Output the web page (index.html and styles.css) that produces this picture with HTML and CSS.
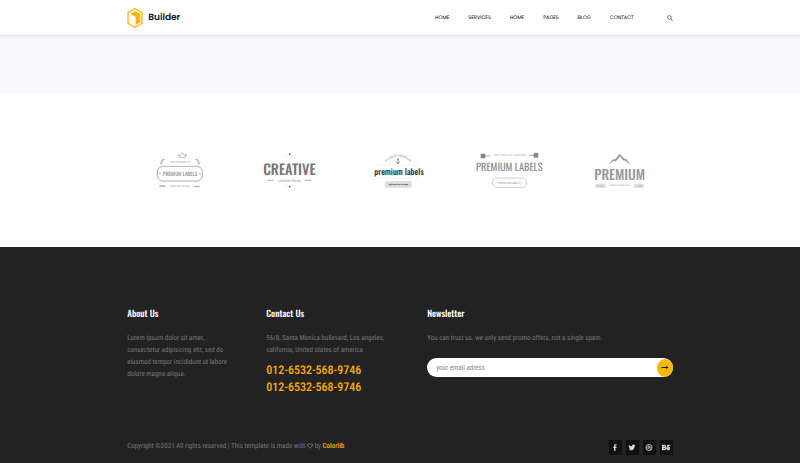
FILE: index.html
```html
<!DOCTYPE html>
<html lang="en">
<head>
<meta charset="utf-8">
<title>Builder</title>
<meta name="viewport" content="width=device-width, initial-scale=1">
<link rel="stylesheet" href="styles.css">
</head>
<body>
<header class="header">
  <div class="container header-row">
    <a class="logo" href="#">
      <svg class="logo-mark" viewBox="0 0 48 60" aria-hidden="true">
        <path d="M24 2 45 14V46L24 58 3 46V14Z" fill="#fff" stroke="#fdb913" stroke-width="4"/>
        <path d="M10 17 24 9 40 18V43L26 51V27Z" fill="#f8b600"/>
      </svg>
      <span>Builder</span>
    </a>
    <nav class="nav">
      <a href="#">HOME</a><a href="#">SERVICES</a><a href="#">HOME</a><a href="#">PAGES</a><a href="#">BLOG</a><a href="#">CONTACT</a>
      <button class="search" type="button" aria-label="Search"><svg viewBox="0 0 16 16"><circle cx="6.5" cy="6.5" r="5" fill="none" stroke="#555" stroke-width="2"/><path d="M10 10 15 15" stroke="#555" stroke-width="2.5"/></svg></button>
    </nav>
  </div>
</header>
<main>
  <div class="strip"></div>
  <section class="brands">
    <svg class="brand" viewBox="0 0 270 150" fill="#888" text-anchor="middle">
      <path d="M130 28 136 32 140 25 144 25 148 32 154 28 150 38H134Z" fill="none" stroke="#999" stroke-width="2"/>
      <path d="M78 58C78 50 82 45 89 42M192 58C192 50 188 45 181 42" fill="none" stroke="#aaa" stroke-width="5" stroke-dasharray="4 1"/>
      <text x="136" y="55" font-size="9">HIGH QUALITY</text>
      <path d="M84 64H186C190 65 202 68 202 78V94C202 104 190 107 186 108H84C80 107 67 104 67 94V78C67 68 80 65 84 64Z" fill="none" stroke="#888" stroke-width="2"/>
      <circle cx="75" cy="86" r="2"/><circle cx="195" cy="86" r="2"/>
      <text class="narrow" x="135" y="93" font-size="16">PREMIUM LABELS</text>
      <path d="M73 121h18v5H73ZM177 122h17v5h-17Z" opacity=".6"/>
      <text x="134" y="125" font-size="7">CREATIVE PACKERS</text>
    </svg>
    <svg class="brand" viewBox="0 0 270 150" fill="#777" text-anchor="middle">
      <text class="narrow medium" x="133" y="89" font-size="43">CREATIVE</text>
      <path d="M67 106H86M180 106H199" stroke="#888" stroke-width="2"/>
      <text x="133" y="110" font-size="10">LOREM IPSUM</text>
      <circle cx="134" cy="28" r="3"/><circle cx="124" cy="31" r="1"/><circle cx="143" cy="31" r="1"/>
      <circle cx="134" cy="125" r="3"/><circle cx="124" cy="122" r="1"/><circle cx="143" cy="122" r="1"/>
    </svg>
    <svg class="brand" viewBox="0 0 270 150" fill="#333" text-anchor="middle">
      <path id="arch" d="M92 54A48 48 0 0 1 168 54" fill="none"/>
      <text font-size="9" fill="#777"><textPath href="#arch" startOffset="50%">VINTAGE PREMIUM</textPath></text>
      <path d="M129 40V56M124 50 129 57 134 50M126 43h6" fill="none" stroke="#666" stroke-width="2"/>
      <path d="M66 61H192M66 99H192" stroke="#ddd"/>
      <text class="narrow medium" x="132" y="89" font-size="25">premium labels</text>
      <rect x="89" y="108" width="82" height="20" rx="9" fill="#ddd"/>
      <text x="130" y="121" font-size="6" font-weight="700">high quality vintage</text>
    </svg>
    <svg class="brand" viewBox="0 0 270 150" fill="#888" text-anchor="middle">
      <path d="M48 27h12v12H48ZM60 33H75M207 25h12v12h-12ZM192 31h15" stroke="#888" stroke-width="2"/>
      <text x="134" y="33" font-size="9" fill="#999">THE CREATIVE DESIGNS</text>
      <text class="narrow" x="133" y="79" font-size="31">PREMIUM LABELS</text>
      <rect x="82" y="99" width="103" height="29" rx="14" fill="none" stroke="#bbb" stroke-width="2"/>
      <text x="133" y="116" font-size="8">• PREMIUM LABELS •</text>
    </svg>
    <svg class="brand" viewBox="0 0 270 150" fill="#999" text-anchor="middle">
      <path d="M100 59 114 43 121 43 134 26 148 41 153 41 167 59 151 47 144 46 135 34 128 43 123 49 114 49Z"/>
      <text class="narrow medium" x="134" y="106" font-size="41">PREMIUM</text>
      <rect x="61" y="116" width="31" height="12" rx="4" fill="#ddd"/><rect x="177" y="116" width="30" height="12" rx="4" fill="#ddd"/>
      <text x="76" y="125" font-size="7">★★★</text><text x="192" y="125" font-size="7">★★★</text>
      <text x="134" y="124" font-size="7">CREATIVE DESIGNS</text>
    </svg>
  </section>
</main>
<footer class="footer">
  <div class="container footer-grid">
    <section><h2>About Us</h2><p>Lorem ipsum dolor sit amet,<br>consectetur adipisicing elit, sed do<br>eiusmod tempor incididunt ut labore<br>dolore magna aliqua.</p></section>
    <section><h2>Contact Us</h2><p>56/8, Santa Monica bullevard, Los angeles,<br>california, United states of america</p>
      <div class="phones"><a href="#">012-6532-568-9746</a><a href="#">012-6532-568-9746</a></div></section>
    <section><h2>Newsletter</h2><p>You can trust us. we only send promo offers, not a single spam.</p>
      <form class="subscribe"><input type="email" aria-label="Email address" placeholder="your email adress"><button type="button" aria-label="Subscribe"><svg viewBox="0 0 20 12"><path d="M1 6H17M13 2 17 6 13 10" fill="none" stroke="#222" stroke-width="2.5"/></svg></button></form></section>
  </div>
  <div class="container bottom">
    <p>Copyright ©2021 All rights reserved | This template is made with <svg class="heart" viewBox="0 0 16 14" role="img" aria-label="love"><path d="M8 13 2 7C-1 3 4-1 8 3 12-1 17 3 14 7Z" fill="none" stroke="#888" stroke-width="2"/></svg> by <a href="#">Colorlib</a></p>
    <div class="social">
      <a href="#" aria-label="Facebook"><svg viewBox="0 0 16 16"><path d="M6 16V9H4V6H6V4C6 1 8 0 12 1V3C10 3 9 3 9 5V6h3l-1 3H9v7Z"/></svg></a>
      <a href="#" aria-label="Twitter"><svg viewBox="0 0 16 16"><path d="M1 2C3 4 5 5 8 5 8 1 12 0 14 3L16 2 14 5C14 13 6 17 0 13 2 13 4 13 5 12 3 12 2 11 2 9H3C1 8 1 7 1 6L2 6C0 5 0 3 1 2Z"/></svg></a>
      <a href="#" aria-label="Dribbble"><svg viewBox="0 0 16 16"><g fill="none" stroke="#bbb" stroke-width="2"><circle cx="8" cy="8" r="7"/><path d="M5 2C9 6 11 10 11 14M1 7C7 8 11 6 13 3M3 13C6 8 10 7 15 9"/></g></svg></a>
      <a href="#" aria-label="Behance"><svg viewBox="0 0 20 16"><path fill-rule="evenodd" stroke="#ddd" d="M0 2H6C11 2 11 7 8 8 12 9 11 14 6 14H0ZM3 4V7H6C8 7 8 4 6 4ZM3 9V12H6C9 12 9 9 6 9ZM13 2h6v2h-6ZM20 11H14C14 13 17 13 17 12H20C18 16 11 15 11 10 11 4 20 4 20 11ZM14 9H17C17 7 14 7 14 9Z"/></svg></a>
    </div>
  </div>
</footer>
</body>
</html>
```
FILE: styles.css
```css
* { box-sizing: border-box; }
body { margin: 0; background: #fff; font-family: "Roboto Condensed", "Liberation Sans Narrow", "Roboto", sans-serif; font-size: 7px; font-weight: 400; line-height: 12px; color: #777; text-rendering: geometricPrecision; }
a { color: inherit; text-decoration: none; }
p, h2 { margin: 0; }
.container { width: 68.2%; margin: 0 auto; }
.header { position: relative; background: #fff; box-shadow: 0 1px 3px rgba(0, 0, 0, .15); }
.header-row { display: flex; align-items: center; justify-content: space-between; height: 35px; }
.logo { display: flex; align-items: center; gap: 5px; font: 600 9px/20px "Poppins", "Inter", sans-serif; color: #111; }
.logo-mark { width: 16px; height: 20px; }
.nav { display: flex; align-items: center; gap: 19px; font: 400 5px/12px "Poppins", "Inter", sans-serif; color: #000; }
.search { width: 6px; height: 6px; margin-left: 14px; padding: 0; border: 0; background: none; }
.search svg, .social svg, .subscribe svg { display: block; }
.strip { height: 59px; background: #f9f9ff; }
.brands { display: grid; grid-template-columns: repeat(5, 1fr); justify-items: center; width: 68.75%; margin: 0 auto; padding: 51px 0 52px; }
.brand { width: 90px; height: 50px; font-family: "Open Sans", sans-serif; font-weight: 500; }
.narrow { font-family: "Oswald", "Roboto Condensed", "Liberation Sans Narrow", sans-serif; font-weight: 400; }
.medium { font-weight: 500; }
.footer { padding-top: 60px; background: #222; }
.footer-grid { display: grid; grid-template-columns: 139px 161px 1fr; }
.footer h2 { margin-bottom: 12px; font: 500 9px/13px "Oswald", "Roboto Condensed", "Liberation Sans Narrow", sans-serif; color: #fff; }
.phones { display: grid; padding-top: 6px; font-size: 12px; line-height: 17px; font-weight: 500; color: #fdae00; }
.subscribe { display: flex; align-items: center; margin-top: 14px; height: 19px; border-radius: 10px; background: #fff; }
.subscribe input { flex: 1; min-width: 0; padding: 0 9px; border: 0; background: none; font: inherit; outline: 0; }
.subscribe input::placeholder { color: #888; }
.subscribe button { display: grid; place-items: center; width: 16px; height: 18px; padding: 0; border: 0; border-radius: 50%; background: #fdb900; }
.subscribe svg { width: 8px; height: 5px; }
.bottom { display: flex; align-items: flex-start; justify-content: space-between; padding: 44px 0 8px; }
.bottom p a { color: #fdae00; font-weight: 500; }
.heart { width: 6px; height: 6px; vertical-align: -1px; }
.social { display: flex; gap: 4px; }
.social a { display: grid; place-items: center; width: 13px; height: 15px; background: #111; }
.social svg { width: 8px; height: 7px; fill: #ddd; }
```
